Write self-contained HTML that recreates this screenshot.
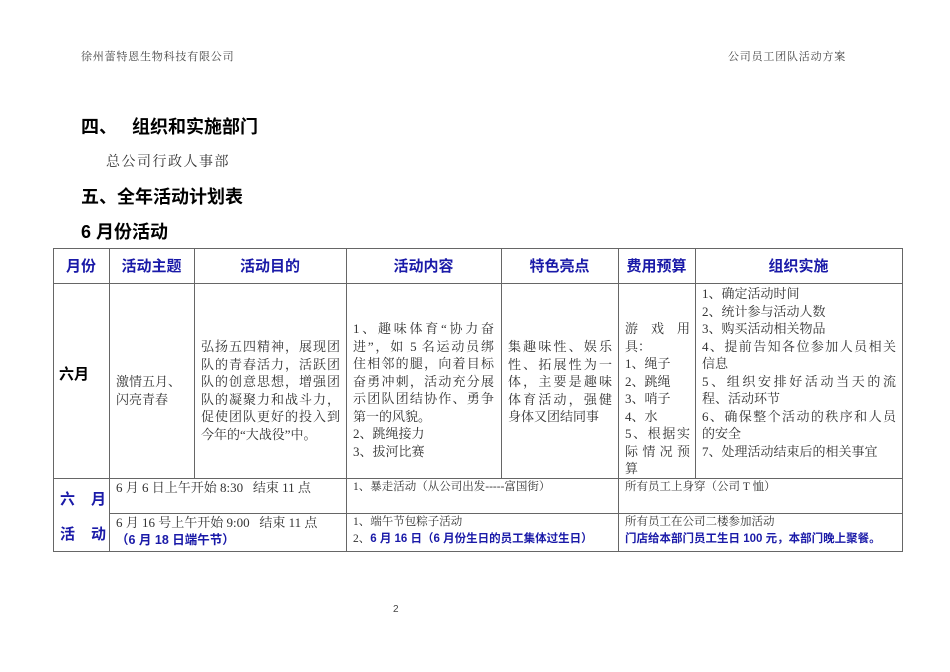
<!DOCTYPE html>
<html><head><meta charset="utf-8"><style>
body{margin:0;background:#fff;}
#p{position:relative;width:950px;height:672px;overflow:hidden;font-family:"Liberation Serif","Noto Serif CJK SC",serif;color:#222;}
.a{position:absolute;white-space:nowrap;}
.h{font-family:"Liberation Sans","Noto Sans CJK SC",sans-serif;font-weight:bold;font-size:18px;color:#000;}
.th{font-family:"Liberation Sans","Noto Sans CJK SC",sans-serif;font-weight:bold;font-size:15px;color:#1a1aa8;text-align:center;top:258px;line-height:18px;}
.l{position:absolute;background:#666;}
.t{position:absolute;font-size:13px;line-height:17.5px;color:#333;}
.t div{text-align:justify;text-align-last:justify;white-space:nowrap;}
.t div.n{text-align-last:left;}
.s{font-size:11.5px;line-height:17px;}
.b{color:#1a1aa8;font-weight:bold;font-family:"Liberation Sans","Noto Sans CJK SC",sans-serif;}
</style></head><body><div id="p">
<div class="a" style="left:81px;top:48px;font-size:11px;letter-spacing:.8px;color:#444">徐州蕾特恩生物科技有限公司</div>
<div class="a" style="left:728px;top:48px;font-size:11px;letter-spacing:.8px;color:#444">公司员工团队活动方案</div>
<div class="a h" style="left:81px;top:113px">四、&nbsp;&nbsp;&nbsp;组织和实施部门</div>
<div class="a" style="left:106px;top:151px;font-size:14px;letter-spacing:1.5px;color:#333">总公司行政人事部</div>
<div class="a h" style="left:81px;top:183px">五、全年活动计划表</div>
<div class="a h" style="left:81px;top:218px">6 月份活动</div>

<div class="l" style="left:53px;top:248px;width:850px;height:1px"></div>
<div class="l" style="left:53px;top:283px;width:850px;height:1px"></div>
<div class="l" style="left:53px;top:478px;width:850px;height:1px"></div>
<div class="l" style="left:109px;top:513px;width:794px;height:1px"></div>
<div class="l" style="left:53px;top:551px;width:850px;height:1px"></div>
<div class="l" style="left:53px;top:248px;width:1px;height:304px"></div>
<div class="l" style="left:902px;top:248px;width:1px;height:304px"></div>
<div class="l" style="left:109px;top:248px;width:1px;height:304px"></div>
<div class="l" style="left:194px;top:248px;width:1px;height:230px"></div>
<div class="l" style="left:346px;top:248px;width:1px;height:304px"></div>
<div class="l" style="left:501px;top:248px;width:1px;height:230px"></div>
<div class="l" style="left:618px;top:248px;width:1px;height:304px"></div>
<div class="l" style="left:695px;top:248px;width:1px;height:230px"></div>

<div class="a th" style="left:53px;width:56px">月份</div>
<div class="a th" style="left:109px;width:85px">活动主题</div>
<div class="a th" style="left:194px;width:152px">活动目的</div>
<div class="a th" style="left:346px;width:155px">活动内容</div>
<div class="a th" style="left:501px;width:117px">特色亮点</div>
<div class="a th" style="left:618px;width:77px">费用预算</div>
<div class="a th" style="left:695px;width:207px">组织实施</div>

<div class="a h" style="left:59px;top:363px;font-size:15px">六月</div>
<div class="t" style="left:116px;top:373px;width:70px"><div class="n">激情五月、</div><div class="n">闪亮青春</div></div>
<div class="t" style="left:201px;top:338px;width:139px"><div>弘扬五四精神，展现团</div><div>队的青春活力，活跃团</div><div>队的创意思想，增强团</div><div>队的凝聚力和战斗力，</div><div>促使团队更好的投入到</div><div class="n">今年的“大战役”中。</div></div>
<div class="t" style="left:353px;top:320px;width:141px"><div>1、趣味体育“协力奋</div><div>进”，如 5 名运动员绑</div><div>住相邻的腿，向着目标</div><div>奋勇冲刺，活动充分展</div><div>示团队团结协作、勇争</div><div class="n">第一的风貌。</div><div class="n">2、跳绳接力</div><div class="n">3、拔河比赛</div></div>
<div class="t" style="left:508px;top:338px;width:104px"><div>集趣味性、娱乐</div><div>性、拓展性为一</div><div>体，主要是趣味</div><div>体育活动，强健</div><div class="n">身体又团结同事</div></div>
<div class="t" style="left:625px;top:320px;width:65px"><div>游 戏 用</div><div class="n">具：</div><div class="n">1、绳子</div><div class="n">2、跳绳</div><div class="n">3、哨子</div><div class="n">4、水</div><div>5、根据实</div><div>际情况预</div><div class="n">算</div></div>
<div class="t" style="left:702px;top:285px;width:194px"><div class="n">1、确定活动时间</div><div class="n">2、统计参与活动人数</div><div class="n">3、购买活动相关物品</div><div>4、提前告知各位参加人员相关</div><div class="n">信息</div><div>5、组织安排好活动当天的流</div><div class="n">程、活动环节</div><div>6、确保整个活动的秩序和人员</div><div class="n">的安全</div><div class="n">7、处理活动结束后的相关事宜</div></div>

<div class="a b" style="left:60px;top:488px;font-size:15px;letter-spacing:16px">六月</div>
<div class="a b" style="left:60px;top:523px;font-size:15px;letter-spacing:16px">活动</div>
<div class="a" style="left:116px;top:479px;font-size:13px;line-height:17px;color:#333">6 月 6 日上午开始 8:30&nbsp;&nbsp;&nbsp;结束 11 点</div>
<div class="a" style="left:116px;top:514px;font-size:13px;line-height:17px;color:#333">6 月 16 号上午开始 9:00&nbsp;&nbsp;&nbsp;结束 11 点<br><span class="b" style="font-size:12.5px">（6 月 18 日端午节）</span></div>
<div class="a s" style="left:353px;top:479px;color:#333">1、暴走活动（从公司出发-----富国街）</div>
<div class="a s" style="left:353px;top:514px;color:#333">1、端午节包粽子活动<br>2、<span class="b">6 月 16 日（6 月份生日的员工集体过生日）</span></div>
<div class="a s" style="left:625px;top:479px;color:#333">所有员工上身穿（公司 T 恤）</div>
<div class="a s" style="left:625px;top:514px;color:#333">所有员工在公司二楼参加活动<br><span class="b">门店给本部门员工生日 100 元，本部门晚上聚餐。</span></div>

<div class="a" style="left:393px;top:604px;font-size:10px;color:#444;font-family:'Liberation Sans',sans-serif">2</div>
</div></body></html>
